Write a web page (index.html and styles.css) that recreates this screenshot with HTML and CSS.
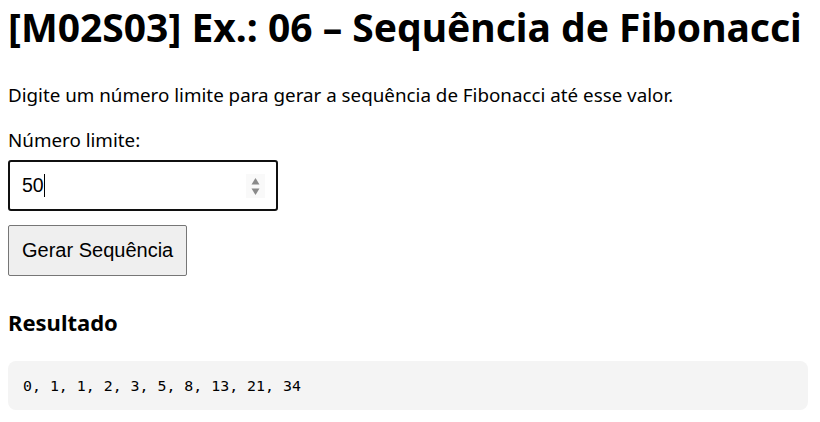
FILE: index.html
```html
<!DOCTYPE html>
<html lang="pt-BR">
<head>
<meta charset="utf-8">
<title>Fibonacci</title>
<link rel="stylesheet" href="styles.css">
</head>
<body>
<h1 class="title">[M02S03] Ex.: 06 – Sequência de Fibonacci</h1>
<p class="intro">Digite um número limite para gerar a sequência de Fibonacci até esse valor.</p>
<label class="label" for="limite">Número limite:</label>
<div class="field">
  <span class="value">50<span class="caret"></span></span>
  <span class="spin">
    <svg width="19" height="24" viewBox="0 0 19 24"><path d="M9.5 4 L13.5 10.5 L5.5 10.5 Z" fill="#8a8a8a"/><path d="M5.5 14.5 L13.5 14.5 L9.5 21 Z" fill="#8a8a8a"/></svg>
  </span>
</div>
<button class="btn" type="button">Gerar Sequência</button>
<h3 class="sub">Resultado</h3>
<pre class="result">0, 1, 1, 2, 3, 5, 8, 13, 21, 34</pre>
</body>
</html>
```
FILE: styles.css
```css
* { box-sizing: border-box; }
body {
  margin: 8px;
  max-width: 800px;
  font-family: "Noto Sans", "Open Sans", sans-serif;
  font-size: 18.8px;
  color: #000;
  background: #fff;
}
.title {
  font-size: 39px;
  font-weight: 700;
  margin: 0;
  line-height: 38px;
  white-space: nowrap;
}
.intro {
  margin: 37px 0 0;
  line-height: 24px;
}
.label {
  display: block;
  margin-top: 21px;
  line-height: 24px;
}
.field {
  margin-top: 8px;
  width: 270px;
  height: 51px;
  border: 2px solid #101010;
  border-radius: 3px;
  display: flex;
  align-items: center;
  justify-content: space-between;
  padding: 0 11px 0 12px;
}
.value {
  font-family: "Liberation Sans", Arial, sans-serif;
  font-size: 19.5px;
  display: flex;
  align-items: center;
}
.caret {
  display: inline-block;
  width: 1px;
  height: 23px;
  background: #000;
}
.spin {
  display: flex;
  background: #f9f9f9;
}
.btn {
  display: block;
  margin-top: 14px;
  height: 51px;
  padding: 0 13px;
  font-family: "Liberation Sans", Arial, sans-serif;
  font-size: 20px;
  color: #000;
  background: #efefef;
  border: 1px solid #767676;
  border-radius: 2px;
}
.sub {
  font-size: 22px;
  font-weight: 700;
  margin: 32px 0 0;
  line-height: 28px;
}
.result {
  margin: 25px 0 0;
  background: #f4f4f4;
  border-radius: 8px;
  height: 49px;
  padding: 1px 15px 0;
  display: flex;
  align-items: center;
  font-family: "DejaVu Sans Mono", "Liberation Mono", monospace;
  font-size: 14.9px;
}
```
